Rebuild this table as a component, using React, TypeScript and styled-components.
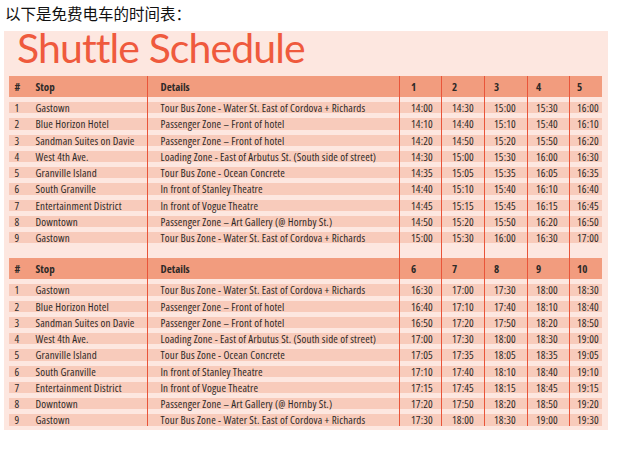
import React from "react";
import styled, { createGlobalStyle } from "styled-components";

const GlobalStyle = createGlobalStyle`
  html, body {
    margin: 0;
    padding: 0;
    background: #ffffff;
  }
  body {
    font-family: "Noto Sans CJK SC", "Liberation Sans", sans-serif;
  }
`;

type Stop = { name: string; details: string };

const stops: Stop[] = [
  { name: "Gastown", details: "Tour Bus Zone - Water St. East of Cordova + Richards" },
  { name: "Blue Horizon Hotel", details: "Passenger Zone \u2013 Front of hotel" },
  { name: "Sandman Suites on Davie", details: "Passenger Zone \u2013 Front of hotel" },
  { name: "West 4th Ave.", details: "Loading Zone - East of Arbutus St. (South side of street)" },
  { name: "Granville Island", details: "Tour Bus Zone - Ocean Concrete" },
  { name: "South Granville", details: "In front of Stanley Theatre" },
  { name: "Entertainment District", details: "In front of Vogue Theatre" },
  { name: "Downtown", details: "Passenger Zone \u2013 Art Gallery (@ Hornby St.)" },
  { name: "Gastown", details: "Tour Bus Zone - Water St. East of Cordova + Richards" },
];

const offsets = [0, 10, 20, 30, 35, 40, 45, 50, 60];

const fmt = (mins: number) => {
  const h = Math.floor(mins / 60);
  const m = mins % 60;
  return `${h}:${m.toString().padStart(2, "0")}`;
};

const tables = [
  { runs: [1, 2, 3, 4, 5], start: 14 * 60 },
  { runs: [6, 7, 8, 9, 10], start: 16 * 60 + 30 },
];

const timePads = [11, 10, 9, 8, 7];

type Kind = "head" | "data" | "spacer";

const Caption = styled.div`
  height: 31px;
  padding-left: 5px;
  font-size: 15.5px;
  line-height: 27px;
  color: #111;
  font-family: "Noto Sans CJK SC", "Liberation Sans", sans-serif;
`;

const Panel = styled.div`
  margin-left: 4px;
  width: 593px;
  padding: 0 6px 4px 5px;
  background: #fde7e0;
`;

const Title = styled.h1`
  margin: 0;
  height: 45px;
  padding-left: 8px;
  font-family: Lato, "Open Sans", sans-serif;
  font-weight: 400;
  font-size: 41px;
  line-height: 33px;
  letter-spacing: -0.9px;
  color: #ef5a3d;
`;

const Grid = styled.div`
  display: flex;
  flex-direction: column;
  font-family: "Open Sans", "Liberation Sans", sans-serif;
  font-stretch: 75%;
  color: #2e2a28;
`;

const Row = styled.div<{ $kind: Kind }>`
  display: grid;
  grid-template-columns: 21px 117px 252px 42px 43px 43px 42px 33px;
  height: ${(p) => (p.$kind === "head" ? "21px" : p.$kind === "data" ? "16.25px" : "15px")};
  font-size: 11px;
  letter-spacing: ${(p) => (p.$kind === "data" ? "0.15px" : "0")};
  font-weight: ${(p) => (p.$kind === "head" ? 700 : 400)};
  background: ${(p) =>
    p.$kind === "head"
      ? "#f29c7e"
      : p.$kind === "data"
      ? "linear-gradient(to bottom, transparent 4.75px, #f8cbbb 4.75px)"
      : "transparent"};
`;

const Cell = styled.div<{ $line?: boolean; $pad: number; $kind: Kind }>`
  display: flex;
  align-items: center;
  padding-left: ${(p) => p.$pad}px;
  padding-top: ${(p) => (p.$kind === "data" ? "4.75px" : "0")};
  box-sizing: border-box;
  border-left: ${(p) => (p.$line ? "1.3px solid #e9553a" : "none")};
  white-space: nowrap;
  line-height: 1;
`;

const cellPads = (i: number) => (i === 0 ? 5.5 : i === 1 ? 5.5 : i === 2 ? 12.5 : timePads[i - 3]);

const RowCells = ({ kind, values }: { kind: Kind; values: string[] }) => (
  <Row $kind={kind}>
    {values.map((v, i) => (
      <Cell key={i} $kind={kind} $line={i >= 2} $pad={cellPads(i)}>
        {v}
      </Cell>
    ))}
  </Row>
);

export default function App() {
  return (
    <>
      <GlobalStyle />
      <Caption>以下是免费电车的时间表：</Caption>
      <Panel>
        <Title>Shuttle Schedule</Title>
        <Grid>
          {tables.map((t, ti) => (
            <React.Fragment key={ti}>
              {ti > 0 && <RowCells kind="spacer" values={["", "", "", "", "", "", "", ""]} />}
              <RowCells kind="head" values={["#", "Stop", "Details", ...t.runs.map(String)]} />
              {stops.map((s, si) => (
                <RowCells
                  key={si}
                  kind="data"
                  values={[
                    String(si + 1),
                    s.name,
                    s.details,
                    ...t.runs.map((_, ri) => fmt(t.start + ri * 30 + offsets[si])),
                  ]}
                />
              ))}
            </React.Fragment>
          ))}
        </Grid>
      </Panel>
    </>
  );
}
